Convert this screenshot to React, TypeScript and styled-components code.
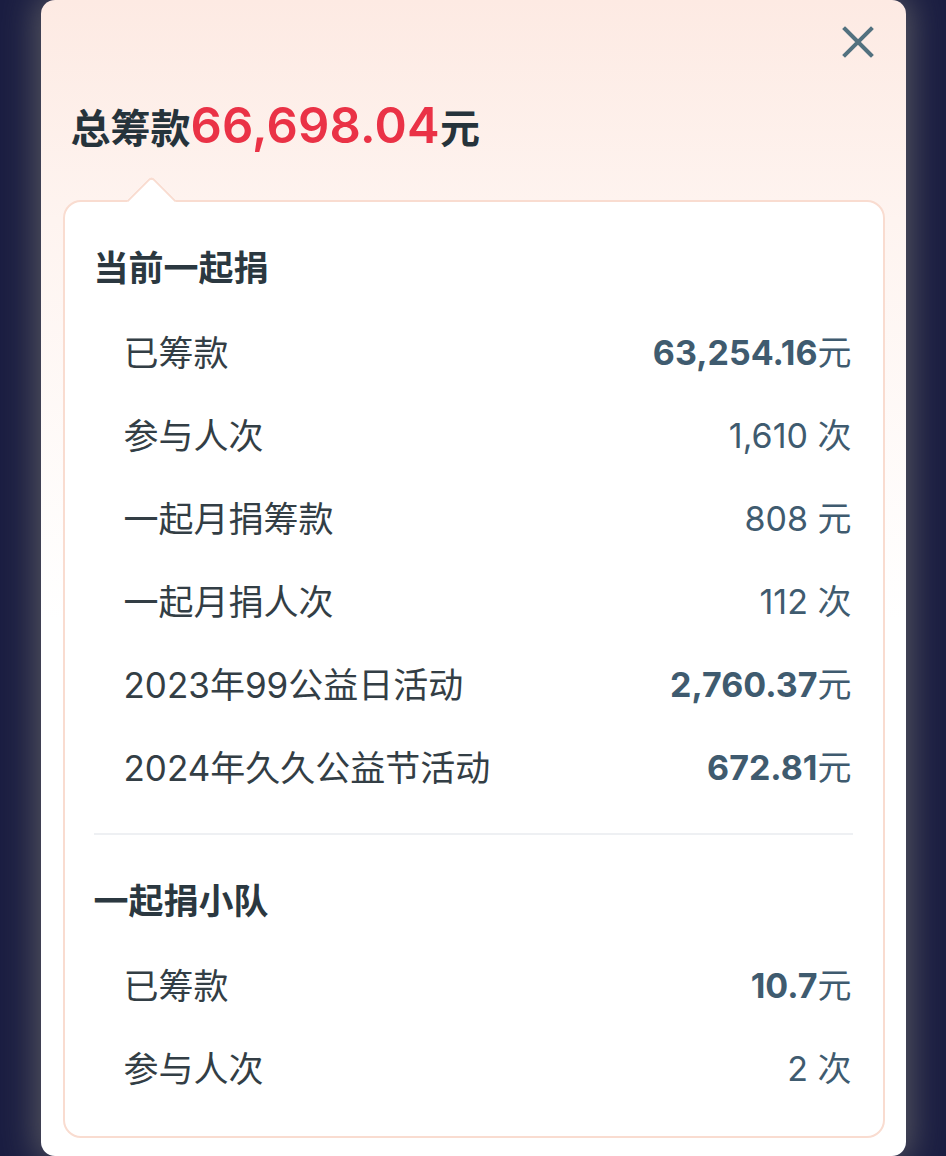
import React from "react";
import styled, { createGlobalStyle } from "styled-components";

const Global = createGlobalStyle`
  html, body { margin: 0; padding: 0; }
  body {
    background: #1b1e42;
    font-family: Inter, "Noto Sans CJK SC", sans-serif;
    overflow: hidden;
  }
`;

const Page = styled.div`
  width: 946px;
  height: 1156px;
  display: flex;
  justify-content: center;
  background: linear-gradient(90deg, #1b1e42 0, #1b1e42 8px, transparent 40px, transparent 906px, #1b1e42 938px);
`;

const Card = styled.div`
  position: relative;
  box-sizing: border-box;
  width: 865px;
  height: 1156px;
  border-radius: 14px;
  background: linear-gradient(180deg, #fdeae3 0px, #fef4f0 220px, #ffffff 620px);
  box-shadow: 0 0 32px 6px rgba(95, 95, 100, 0.85);
  padding: 0 21px 0 22px;
  display: flex;
  flex-direction: column;
`;

const CloseButton = styled.button`
  position: absolute;
  top: 26px;
  right: 32px;
  width: 32px;
  height: 32px;
  padding: 0;
  border: 0;
  background: none;
  cursor: pointer;
  display: flex;
  align-items: center;
  justify-content: center;
`;

const Title = styled.h1`
  margin: 0;
  padding: 102px 0 0 8px;
  height: 48px;
  line-height: 48px;
  font-size: 40px;
  font-weight: 700;
  color: #26333b;
  display: flex;
  align-items: baseline;
  white-space: nowrap;
`;

const Amount = styled.span`
  font-size: 49px;
  font-weight: 600;
  color: #ea3246;
  letter-spacing: 0.2px;
`;

const Panel = styled.div`
  position: relative;
  margin-top: 50px;
  box-sizing: border-box;
  background: #fff;
  border: 2px solid #f9dcd0;
  border-radius: 18px;
  padding: 42px 31px 24px 29px;
  height: 938px;

  &::before {
    content: "";
    position: absolute;
    top: -19px;
    left: 69px;
    width: 33px;
    height: 33px;
    background: #fff;
    border-top: 2px solid #f9dcd0;
    border-left: 2px solid #f9dcd0;
    border-top-left-radius: 5px;
    transform: rotate(45deg);
  }
`;

const Heading = styled.h2`
  margin: 0 0 17px;
  font-size: 35px;
  line-height: 48px;
  font-weight: 700;
  color: #2b3840;
`;

const Row = styled.div`
  height: 83px;
  display: flex;
  align-items: center;
  justify-content: space-between;
  padding-left: 30px;
`;

const Label = styled.span`
  font-size: 35px;
  color: #333e45;
`;

const Value = styled.span<{ $bold?: boolean }>`
  font-size: 34px;
  color: #3f5b6f;
  font-weight: ${(p) => (p.$bold ? 700 : 400)};
  white-space: pre;
`;

const Unit = styled.span`
  font-weight: 400;
`;

const Divider = styled.hr`
  margin: 26px -1px 42px 0;
  border: 0;
  height: 2px;
  background: #eef0f3;
`;

const CloseIcon = () => (
  <svg width="32" height="32" viewBox="0 0 32 32">
    <path d="M3 3L29 29M29 3L3 29" stroke="#52717f" strokeWidth="4" strokeLinecap="square" />
  </svg>
);

type Item = { label: string; num: string; unit: string; bold?: boolean };

const current: Item[] = [
  { label: "已筹款", num: "63,254.16", unit: "元", bold: true },
  { label: "参与人次", num: "1,610 ", unit: "次" },
  { label: "一起月捐筹款", num: "808 ", unit: "元" },
  { label: "一起月捐人次", num: "112 ", unit: "次" },
  { label: "2023年99公益日活动", num: "2,760.37", unit: "元", bold: true },
  { label: "2024年久久公益节活动", num: "672.81", unit: "元", bold: true },
];

const team: Item[] = [
  { label: "已筹款", num: "10.7", unit: "元", bold: true },
  { label: "参与人次", num: "2 ", unit: "次" },
];

const Rows = ({ items }: { items: Item[] }) => (
  <>
    {items.map((it) => (
      <Row key={it.label}>
        <Label>{it.label}</Label>
        <Value $bold={it.bold}>
          {it.num}
          <Unit>{it.unit}</Unit>
        </Value>
      </Row>
    ))}
  </>
);

export default function App() {
  return (
    <Page>
      <Global />
      <Card>
        <CloseButton aria-label="关闭">
          <CloseIcon />
        </CloseButton>
        <Title>
          总筹款<Amount>66,698.04</Amount>元
        </Title>
        <Panel>
          <Heading>当前一起捐</Heading>
          <Rows items={current} />
          <Divider />
          <Heading>一起捐小队</Heading>
          <Rows items={team} />
        </Panel>
      </Card>
    </Page>
  );
}
